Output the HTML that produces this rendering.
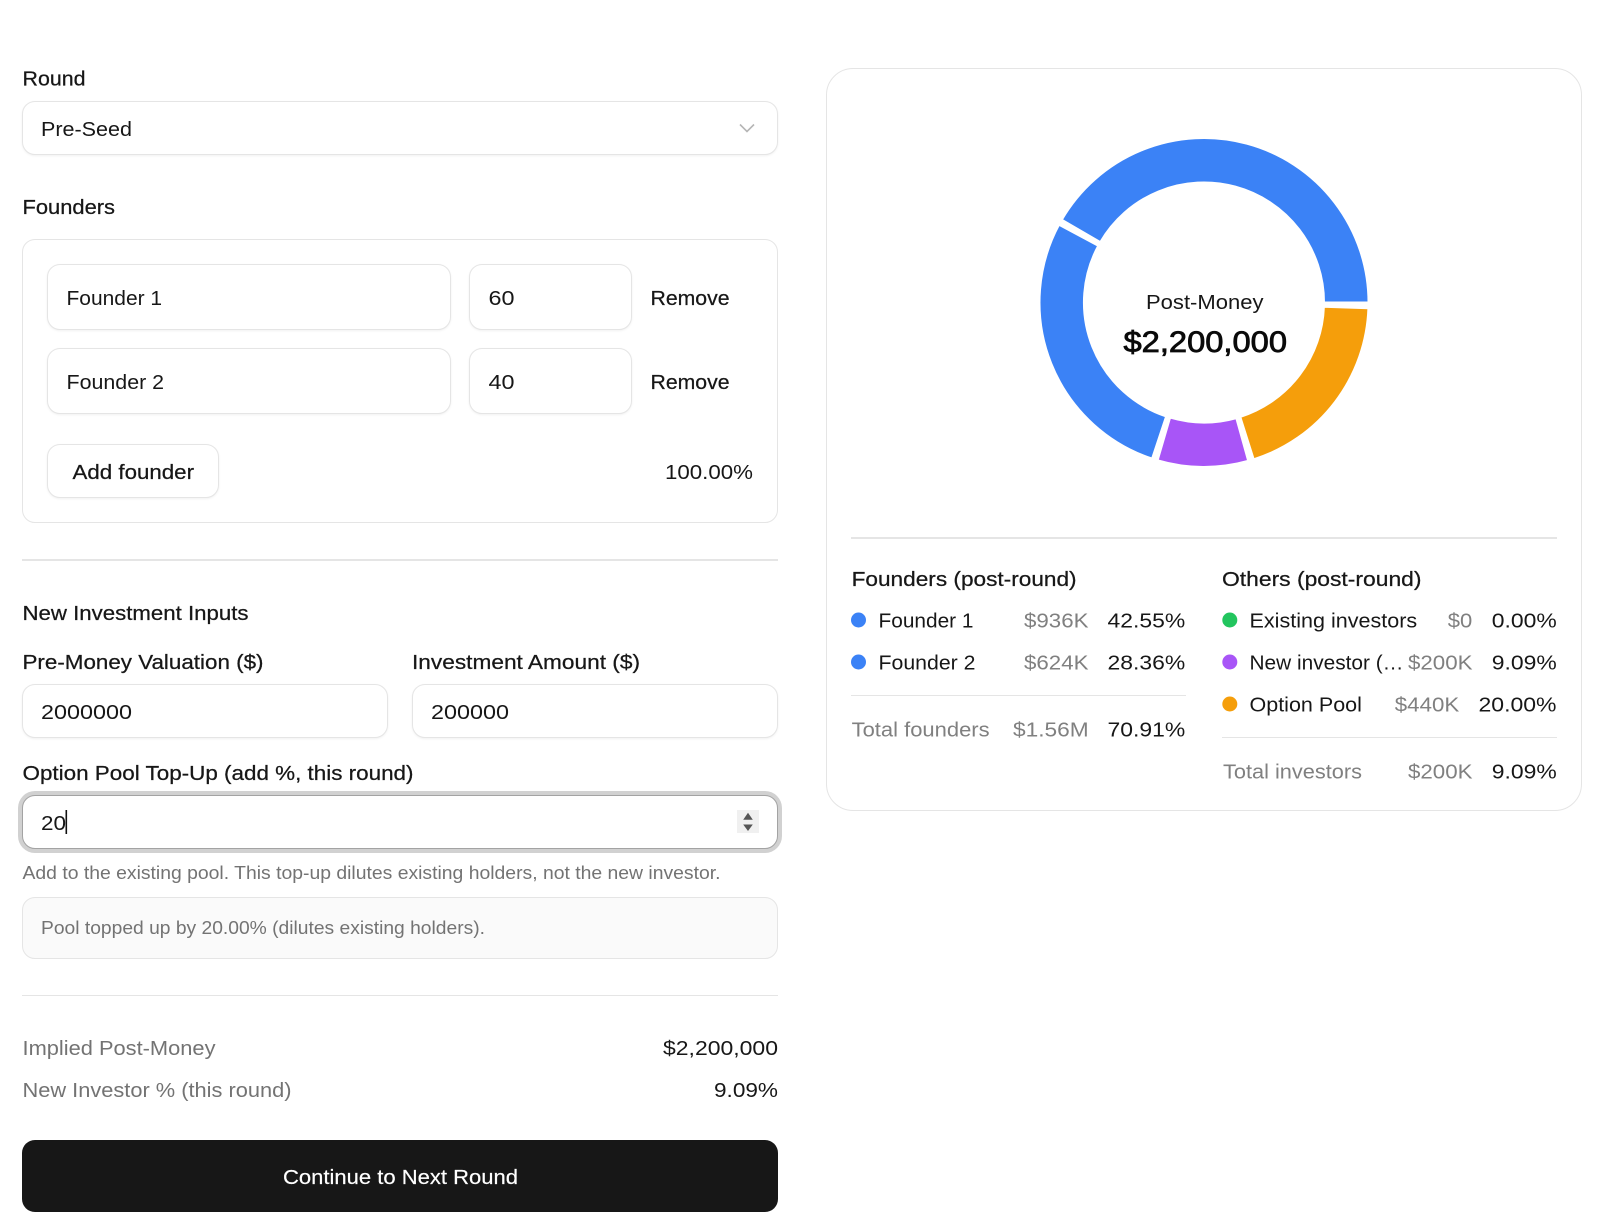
<!DOCTYPE html>
<html lang="en"><head><meta charset="utf-8"><title>Round</title>
<style>
html,body{margin:0;padding:0;background:#fff;width:1602px;height:1230px;overflow:hidden}
.b{position:absolute;box-sizing:border-box;background:#fff;border:1px solid #e5e5e5;border-radius:13px;box-shadow:0 1px 2px rgba(0,0,0,.06)}
.c{position:absolute;box-sizing:border-box;background:#fff;border:1px solid #e5e5e5;border-radius:13px}
.l{position:absolute;background:#e5e5e5}
svg{position:absolute;left:0;top:0}
text{font-family:"Liberation Sans",sans-serif;font-size:20.6px;fill:#171717}
.m{stroke:#171717;stroke-width:.25px}
.g{fill:#737373}
.h{fill:#808080}
.s{font-size:18.6px;fill:#737373}
</style></head><body>
<div class="b" style="left:22px;top:101px;width:756px;height:54px"></div>
<div class="c" style="left:22px;top:239px;width:756px;height:284px"></div>
<div class="b" style="left:47px;top:264px;width:404px;height:66px"></div>
<div class="b" style="left:469px;top:264px;width:163px;height:66px"></div>
<div class="b" style="left:47px;top:348px;width:404px;height:66px"></div>
<div class="b" style="left:469px;top:348px;width:163px;height:66px"></div>
<div class="b" style="left:47px;top:444px;width:172px;height:54px"></div>
<div class="l" style="left:22px;top:559px;width:756px;height:2px"></div>
<div class="b" style="left:22px;top:684px;width:366px;height:54px"></div>
<div class="b" style="left:412px;top:684px;width:366px;height:54px"></div>
<div class="b" style="left:22px;top:795px;width:756px;height:54px;border-color:#a3a3a3;box-shadow:0 0 0 4px #d1d1d1"></div>
<div style="position:absolute;left:737px;top:810px;width:22px;height:23px;background:#f0f0f0"></div>
<div class="c" style="left:22px;top:897px;width:756px;height:62px;background:#fafafa"></div>
<div class="l" style="left:22px;top:995px;width:756px;height:1px"></div>
<div style="position:absolute;left:22px;top:1140px;width:756px;height:72px;background:#171717;border-radius:13px"></div>
<div class="c" style="left:826px;top:68px;width:756px;height:743px;border-radius:27px"></div>
<div class="l" style="left:851px;top:537px;width:706px;height:2px"></div>
<div class="l" style="left:851px;top:695px;width:335px;height:1px"></div>
<div class="l" style="left:1222px;top:737px;width:335px;height:1px"></div>

<svg width="1602" height="1230" viewBox="0 0 1602 1230" xmlns="http://www.w3.org/2000/svg">
<text class="m" x="22.5" y="85.5" textLength="63" lengthAdjust="spacingAndGlyphs">Round</text>
<text x="41" y="136" textLength="91" lengthAdjust="spacingAndGlyphs">Pre-Seed</text>
<path d="M740 124.5l7 7 7-7" fill="none" stroke="#b5b5b5" stroke-width="1.6"/>
<text class="m" x="22.5" y="214" textLength="92.5" lengthAdjust="spacingAndGlyphs">Founders</text>

<text x="66.5" y="305" textLength="95.6" lengthAdjust="spacingAndGlyphs">Founder 1</text>
<text x="488.5" y="305" textLength="26" lengthAdjust="spacingAndGlyphs">60</text>
<text class="m" x="650.5" y="305" textLength="79" lengthAdjust="spacingAndGlyphs">Remove</text>
<text x="66.5" y="389" textLength="97.6" lengthAdjust="spacingAndGlyphs">Founder 2</text>
<text x="488.5" y="389" textLength="26" lengthAdjust="spacingAndGlyphs">40</text>
<text class="m" x="650.5" y="389" textLength="79" lengthAdjust="spacingAndGlyphs">Remove</text>
<text class="m" x="72.5" y="479" textLength="121.5" lengthAdjust="spacingAndGlyphs">Add founder</text>
<text x="665" y="479" textLength="88" lengthAdjust="spacingAndGlyphs">100.00%</text>

<text class="m" x="22.5" y="620" textLength="226" lengthAdjust="spacingAndGlyphs">New Investment Inputs</text>
<text class="m" x="22.5" y="669" textLength="241" lengthAdjust="spacingAndGlyphs">Pre-Money Valuation ($)</text>
<text class="m" x="412" y="669" textLength="228" lengthAdjust="spacingAndGlyphs">Investment Amount ($)</text>
<text x="41" y="719" textLength="91" lengthAdjust="spacingAndGlyphs">2000000</text>
<text x="431" y="719" textLength="78" lengthAdjust="spacingAndGlyphs">200000</text>
<text class="m" x="22.5" y="780" textLength="391" lengthAdjust="spacingAndGlyphs">Option Pool Top-Up (add %, this round)</text>
<text x="41" y="830" textLength="25" lengthAdjust="spacingAndGlyphs">20</text>
<rect x="65.5" y="810" width="1.6" height="24" fill="#111"/>
<path d="M748 812.7l4.8 7h-9.6zM748 831l4.8-6.5h-9.6z" fill="#555"/>
<text class="s" x="22.5" y="879" textLength="698" lengthAdjust="spacingAndGlyphs">Add to the existing pool. This top-up dilutes existing holders, not the new investor.</text>
<text class="s" x="41" y="934" textLength="444" lengthAdjust="spacingAndGlyphs">Pool topped up by 20.00% (dilutes existing holders).</text>

<text class="g" x="22.5" y="1055" textLength="193" lengthAdjust="spacingAndGlyphs">Implied Post-Money</text>
<text x="663" y="1055" textLength="115" lengthAdjust="spacingAndGlyphs">$2,200,000</text>
<text class="g" x="22.5" y="1097" textLength="269" lengthAdjust="spacingAndGlyphs">New Investor % (this round)</text>
<text x="714" y="1097" textLength="64" lengthAdjust="spacingAndGlyphs">9.09%</text>
<text x="283" y="1184" textLength="235" lengthAdjust="spacingAndGlyphs" style="fill:#fff;stroke:#fff;stroke-width:.2px">Continue to Next Round</text>

<g stroke="#fff" stroke-width="2" transform="translate(1204 302.5)">
<path fill="#3b82f6" d="M164.5 0A164.5 164.5 0 0 0 -142.2 -82.7L-103.7 -60.4A120 120 0 0 1 120 0Z"/>
<path fill="#3b82f6" d="M-145 -77.7A164.5 164.5 0 0 0 -51.9 156.1L-37.9 113.9A120 120 0 0 1 -105.8 -56.7Z"/>
<path fill="#a855f7" d="M-46.4 157.8A164.5 164.5 0 0 0 44.2 158.4L32.3 115.6A120 120 0 0 1 -33.9 115.1Z"/>
<path fill="#f59e0b" d="M49.7 156.8A164.5 164.5 0 0 0 164.4 5.7L119.9 4.2A120 120 0 0 1 36.3 114.4Z"/>
</g>
<text x="1146" y="309" textLength="117.5" lengthAdjust="spacingAndGlyphs">Post-Money</text>
<text x="1123.5" y="352" textLength="163.5" lengthAdjust="spacingAndGlyphs" style="font-size:30px;fill:#0a0a0a;stroke:#0a0a0a;stroke-width:.8px">$2,200,000</text>

<text class="m" x="851.6" y="586" textLength="225" lengthAdjust="spacingAndGlyphs">Founders (post-round)</text>
<text class="m" x="1222" y="586" textLength="199.5" lengthAdjust="spacingAndGlyphs">Others (post-round)</text>

<circle cx="858.5" cy="620" r="7.5" fill="#3b82f6"/>
<text x="878.5" y="627.5" textLength="95" lengthAdjust="spacingAndGlyphs">Founder 1</text>
<text class="h" x="1024" y="627.5" textLength="64.5" lengthAdjust="spacingAndGlyphs">$936K</text>
<text x="1107.5" y="627.5" textLength="77.7" lengthAdjust="spacingAndGlyphs">42.55%</text>
<circle cx="858.5" cy="662" r="7.5" fill="#3b82f6"/>
<text x="878.5" y="669.5" textLength="97" lengthAdjust="spacingAndGlyphs">Founder 2</text>
<text class="h" x="1024" y="669.5" textLength="64.5" lengthAdjust="spacingAndGlyphs">$624K</text>
<text x="1107.5" y="669.5" textLength="77.7" lengthAdjust="spacingAndGlyphs">28.36%</text>
<text class="h" x="851.6" y="736.5" textLength="138" lengthAdjust="spacingAndGlyphs">Total founders</text>
<text class="h" x="1013" y="736.5" textLength="75.7" lengthAdjust="spacingAndGlyphs">$1.56M</text>
<text x="1107.5" y="736.5" textLength="77.7" lengthAdjust="spacingAndGlyphs">70.91%</text>

<circle cx="1229.8" cy="620" r="7.5" fill="#22c55e"/>
<text x="1249.5" y="627.5" textLength="167.7" lengthAdjust="spacingAndGlyphs">Existing investors</text>
<text class="h" x="1447.8" y="627.5" textLength="24.5" lengthAdjust="spacingAndGlyphs">$0</text>
<text x="1491.8" y="627.5" textLength="65" lengthAdjust="spacingAndGlyphs">0.00%</text>
<circle cx="1229.8" cy="662" r="7.5" fill="#a855f7"/>
<text x="1249.5" y="669.5" textLength="154" lengthAdjust="spacingAndGlyphs">New investor (…</text>
<text class="h" x="1408" y="669.5" textLength="64.5" lengthAdjust="spacingAndGlyphs">$200K</text>
<text x="1491.8" y="669.5" textLength="65" lengthAdjust="spacingAndGlyphs">9.09%</text>
<circle cx="1229.8" cy="704" r="7.5" fill="#f59e0b"/>
<text x="1249.5" y="711.5" textLength="112.4" lengthAdjust="spacingAndGlyphs">Option Pool</text>
<text class="h" x="1394.8" y="711.5" textLength="64.4" lengthAdjust="spacingAndGlyphs">$440K</text>
<text x="1478.5" y="711.5" textLength="78" lengthAdjust="spacingAndGlyphs">20.00%</text>
<text class="h" x="1223" y="778.5" textLength="139" lengthAdjust="spacingAndGlyphs">Total investors</text>
<text class="h" x="1408" y="778.5" textLength="64.5" lengthAdjust="spacingAndGlyphs">$200K</text>
<text x="1491.8" y="778.5" textLength="65" lengthAdjust="spacingAndGlyphs">9.09%</text>
</svg>
</body></html>
